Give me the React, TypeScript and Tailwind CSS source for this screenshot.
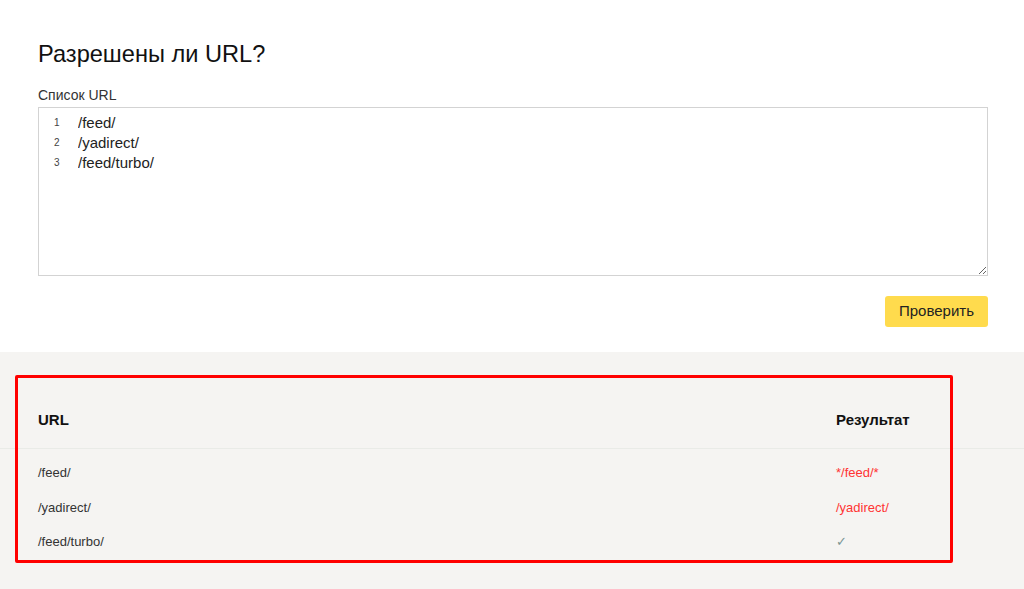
import { useState } from "react";

interface Row {
  url: string;
  result: string;
  allowed: boolean;
}

const rows: Row[] = [
  { url: "/feed/", result: "*/feed/*", allowed: false },
  { url: "/yadirect/", result: "/yadirect/", allowed: false },
  { url: "/feed/turbo/", result: "✓", allowed: true },
];

const App = () => {
  const [urls, setUrls] = useState<string>("/feed/\n/yadirect/\n/feed/turbo/");
  const lines = urls.split("\n");

  return (
    <div className="min-h-[589px] bg-white font-['Liberation_Sans',Arial,sans-serif] text-[#000]">
      <div className="pl-[38px] pr-[36px] pt-[38px] pb-[25px]">
        <h1 className="text-[23.6px] leading-8 text-[#111]">Разрешены ли URL?</h1>
        <label className="mt-[15px] block text-[14px] leading-5 text-[#333]">Список URL</label>
        <div className="mt-[2px] flex h-[169px] border border-[#d3d3d3] bg-white">
          <div className="w-[39px] shrink-0 pt-[5px] pl-[15px] text-[10px] leading-5 text-[#444]">
            {lines.map((_, i) => (
              <div key={i}>{i + 1}</div>
            ))}
          </div>
          <textarea
            className="h-full w-full resize-y pt-[5px] text-[15px] leading-5 text-[#222] outline-none"
            value={urls}
            onChange={(ev) => setUrls(ev.target.value)}
            spellCheck={false}
          />
        </div>
        <div className="mt-[20px] flex justify-end">
          <button className="h-[31px] rounded-[3px] bg-[#ffdb4d] px-[14px] text-[15px] text-[#222]">
            Проверить
          </button>
        </div>
      </div>

      <div className="relative min-h-[237px] bg-[#f5f4f2] pt-[58px]">
        <div className="grid grid-cols-[798px_1fr] border-b border-[#e9ebe7] pb-[18px] pl-[38px] text-[15px] font-bold leading-5 text-[#111]">
          <div>URL</div>
          <div>Результат</div>
        </div>
        <div className="pt-[14px] pl-[38px] text-[13px] leading-5">
          {rows.map((row) => (
            <div key={row.url} className="grid h-[34.5px] grid-cols-[798px_1fr]">
              <div className="text-[#333]">{row.url}</div>
              <div className={row.allowed ? "text-[#7c9494]" : "text-[#f33]"}>{row.result}</div>
            </div>
          ))}
        </div>
        <div className="pointer-events-none absolute top-[23px] left-[15px] h-[188px] w-[938px] rounded-[2px] border-[3px] border-[#ff0000]" />
      </div>
    </div>
  );
};

export default App;
